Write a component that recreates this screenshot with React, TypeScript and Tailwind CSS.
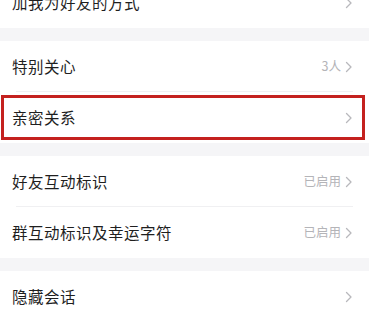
import type { ReactNode } from 'react'

function Chevron() {
    return (
        <svg width="8" height="12" viewBox="0 0 8 12" className="shrink-0">
            <polyline points="1.5,1.5 6,6 1.5,10.5" fill="none" stroke="#b8b8bc" strokeWidth="1.3" strokeLinecap="round" strokeLinejoin="round" />
        </svg>
    )
}

function Row({ label, value, divider, children }: { label: string; value?: string; divider?: boolean; children?: ReactNode }) {
    return (
        <div className="relative h-[51px] bg-white flex items-center pl-[12px] pr-[16px]">
            <span className="flex-1 text-[15.5px] text-[#1f1f1f] tracking-[0.5px]">{label}</span>
            {value && <span className="text-[12.5px] text-[#b4b4b8] mr-[4px]">{value}</span>}
            <Chevron />
            {divider && <div className="absolute left-[16px] right-[16px] bottom-0 h-px bg-[#f0f0f2]" />}
            {children}
        </div>
    )
}

export default function App() {
    return (
        <div
            className="w-[369px] h-[314px] overflow-hidden bg-[#f5f5f7]"
            style={{ fontFamily: '"Noto Sans CJK SC", "Noto Sans", sans-serif' }}
        >
            <div className="mt-[-23px] flex flex-col">
                <Row label="加我为好友的方式" />
                <div className="h-[13px]" />
                <Row label="特别关心" value="3人" divider />
                <Row label="亲密关系">
                    <div className="absolute left-[1px] right-[4px] top-[3px] bottom-[3px] border-[3px] border-[#c4211f]" />
                </Row>
                <div className="h-[13px]" />
                <Row label="好友互动标识" value="已启用" divider />
                <Row label="群互动标识及幸运字符" value="已启用" />
                <div className="h-[13px]" />
                <Row label="隐藏会话" />
            </div>
        </div>
    )
}
